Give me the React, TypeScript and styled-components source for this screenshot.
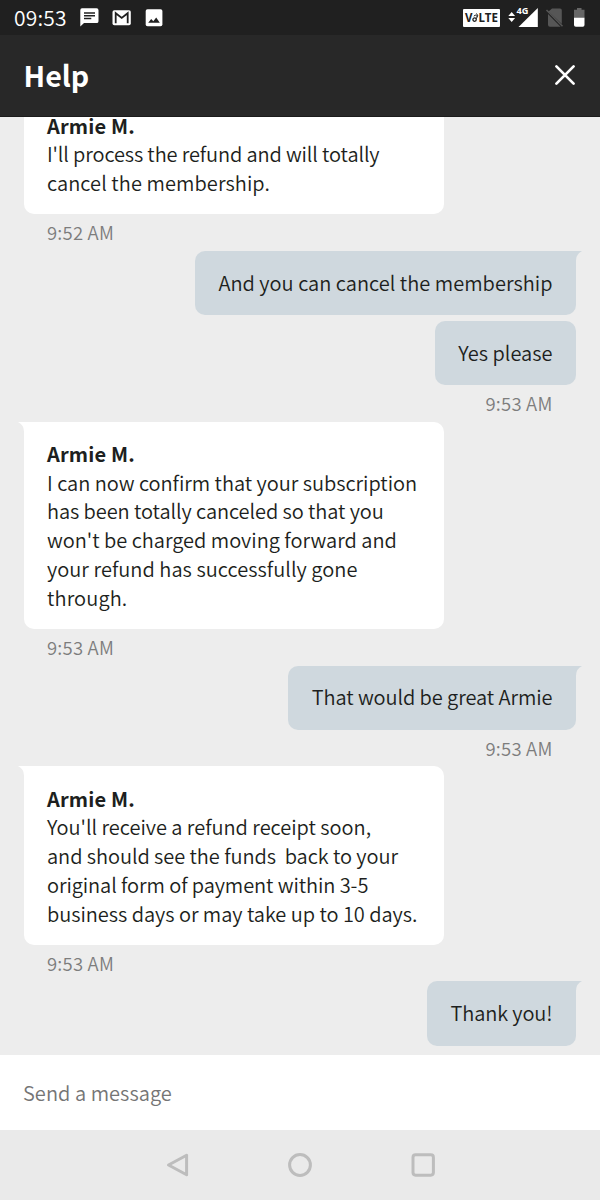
import React from 'react';
import styled, { createGlobalStyle } from 'styled-components';

const Global = createGlobalStyle`
  * { box-sizing: border-box; }
  body { margin: 0; background: #ededed; }
`;

const Screen = styled.div`
  width: 600px;
  height: 1200px;
  display: flex;
  flex-direction: column;
  overflow: hidden;
  background: #ededed;
  color: #1d1f20;
  font-family: 'Noto Sans CJK JP', 'Noto Sans', sans-serif;
  font-weight: 350;
  font-size: 20px;
`;

const StatusBar = styled.div`
  flex: none;
  height: 35px;
  padding: 0 15px 0 14px;
  display: flex;
  align-items: center;
  justify-content: space-between;
  background: #202020;
  color: #fff;
`;

const Clock = styled.span`
  width: 65px;
  font-size: 21px;
  letter-spacing: 0.2px;
  line-height: 35px;
`;

const StatusGroup = styled.div`
  display: flex;
  align-items: center;
  svg { display: block; }
`;

const VolteBadge = styled.span`
  width: 37px;
  height: 18px;
  margin-right: 7px;
  display: flex;
  align-items: center;
  justify-content: center;
  border-radius: 1px;
  background: #fff;
  color: #202020;
  font: 700 11.5px/18px 'Noto Sans', sans-serif;
  svg { margin: 0 0 1px -1px; }
`;

const Header = styled.header`
  flex: none;
  height: 82px;
  padding: 0 24.5px 2px 23.5px;
  display: flex;
  align-items: center;
  justify-content: space-between;
  background: #282828;
  border-bottom: 1px solid #1b1b1b;
  color: #fff;
`;

const Title = styled.h1`
  margin: 0;
  font-size: 28.6px;
  font-weight: 700;
  line-height: 40px;
`;

const CloseButton = styled.button`
  padding: 0;
  border: 0;
  background: none;
  svg { display: block; }
`;

const Chat = styled.main`
  flex: 1;
  min-height: 0;
  padding: 0 24px 9.4px;
  display: flex;
  flex-direction: column;
  justify-content: flex-end;
  overflow: hidden;
`;

const Bubble = styled.div<{ $mine?: boolean; $tail?: boolean }>`
  flex: none;
  position: relative;
  align-self: ${p => (p.$mine ? 'flex-end' : 'flex-start')};
  width: ${p => (p.$mine ? 'auto' : '420px')};
  padding: ${p => (p.$mine ? '17.7px 23.5px' : '18.5px 23px 16.7px')};
  border-radius: 10px;
  border-top-left-radius: ${p => (p.$tail && !p.$mine ? 0 : 10)}px;
  border-top-right-radius: ${p => (p.$tail && p.$mine ? 0 : 10)}px;
  background: ${p => (p.$mine ? '#cfd8de' : '#fff')};
  & + & { margin-top: 6.2px; }
`;

const TailShape = styled.svg<{ $mine?: boolean }>`
  position: absolute;
  top: 0;
  ${p => (p.$mine ? 'right: -6px;' : 'left: -6px; transform: scaleX(-1);')}
  fill: ${p => (p.$mine ? '#cfd8de' : '#fff')};
`;

const Sender = styled.div`
  font-weight: 700;
  letter-spacing: 0.15px;
  line-height: 28.4px;
`;

const Line = styled.div<{ $track: number }>`
  line-height: 28.8px;
  white-space: pre;
  letter-spacing: ${p => p.$track}px;
`;

const Time = styled.time<{ $mine?: boolean }>`
  flex: none;
  height: 36.4px;
  padding: 0 23.5px 0 23px;
  align-self: ${p => (p.$mine ? 'flex-end' : 'flex-start')};
  color: #7d7d7d;
  font-size: 18.5px;
  letter-spacing: 0.2px;
  line-height: 36.4px;
`;

const Composer = styled.div`
  flex: none;
  height: 75px;
  padding: 0 23px;
  background: #fff;
  color: #757575;
  letter-spacing: 0.05px;
  line-height: 75px;
`;

const NavBar = styled.nav`
  flex: none;
  height: 70px;
  display: flex;
  align-items: center;
  justify-content: center;
  gap: 99px;
  background: #eaeaea;
  svg { display: block; fill: none; stroke: #bdbdbd; stroke-width: 3; stroke-linejoin: round; }
`;

type TextLine = [text: string, track: number];
type Item =
  | { kind: 'bubble'; mine?: boolean; tail?: boolean; lines: TextLine[] }
  | { kind: 'time'; mine?: boolean; text: string };

const items: Item[] = [
  { kind: 'bubble', tail: true, lines: [
    ["I'll process the refund and will totally", -0.13],
    ['cancel the membership.', 0.07],
  ] },
  { kind: 'time', text: '9:52 AM' },
  { kind: 'bubble', mine: true, tail: true, lines: [['And you can cancel the membership', 0.02]] },
  { kind: 'bubble', mine: true, lines: [['Yes please', 0]] },
  { kind: 'time', mine: true, text: '9:53 AM' },
  { kind: 'bubble', tail: true, lines: [
    ['I can now confirm that your subscription', -0.03],
    ['has been totally canceled so that you', -0.08],
    ["won't be charged moving forward and", -0.02],
    ['your refund has successfully gone', 0.04],
    ['through.', 0.1],
  ] },
  { kind: 'time', text: '9:53 AM' },
  { kind: 'bubble', mine: true, tail: true, lines: [['That would be great Armie', -0.08]] },
  { kind: 'time', mine: true, text: '9:53 AM' },
  { kind: 'bubble', tail: true, lines: [
    ["You'll receive a refund receipt soon,", -0.02],
    ['and should see the funds  back to your', -0.06],
    ['original form of payment within 3-5', -0.09],
    ['business days or may take up to 10 days.', -0.04],
  ] },
  { kind: 'time', text: '9:53 AM' },
  { kind: 'bubble', mine: true, tail: true, lines: [['Thank you!', -0.1]] },
];

const NotificationIcons = () => (
  <svg width="84" height="35" viewBox="79 0 84 35" fill="#fff">
    <path d="M82 8.3h14.6q1.9 0 1.9 1.9v11q0 1.9-1.9 1.9H84l-3.7 3.4V10.2q0-1.9 1.7-1.9zM84 12.3v1.5h11v-1.5zM84 15v1.5h11V15zM84 17.8v1.5h7.3v-1.5z" fillRule="evenodd" />
    <rect x="112.5" y="10.3" width="18.3" height="14.9" rx="1.8" />
    <path d="M115.7 23.3V13.2l6 4.7 6-4.7v10.1" fill="none" stroke="#202020" strokeWidth="1.8" />
    <rect x="145.7" y="9.3" width="16.7" height="17" rx="1.8" />
    <path d="M148.2 22.8l3-3.8 2.1 2.3 2.9-3.7 3.6 5.2z" fill="#202020" />
  </svg>
);

const VolteWave = () => (
  <svg width="7" height="11" viewBox="0 0 7 11" fill="none" stroke="#202020" strokeWidth="1.3">
    <circle cx="2.6" cy="7.6" r="1.7" />
    <path d="M1.8 4.2q1.6-2 2.6-.4t1.6 0M4 1.6q2.2.4 1.2 3.2l-1 2" strokeWidth="1" />
  </svg>
);

const FourG = styled.span`
  position: absolute;
  left: 9.5px;
  top: 6px;
  font: 700 9.2px/10px 'Noto Sans', sans-serif;
`;

const Signal = styled.div`
  position: relative;
`;

const SignalIcons = () => (
  <Signal>
    <svg width="78" height="35" viewBox="507 0 78 35" fill="#fff">
      <path d="M508.3 16l3.4-3.9 3.4 3.9zM508.3 18l3.4 3.9 3.4-3.9z" />
      <path d="M518.5 27L537.8 8v19z" />
      <path d="M552 8.5h8q1.8 0 1.8 1.8V24L548.5 11.5zM548 14l12.6 12.8H550q-2 0-2-2z" fill="#565656" />
      <path d="M546.5 10l16 16.3" stroke="#565656" strokeWidth="1.5" />
      <path d="M577 8h4.5v1.7h3V18H574V9.7h3z" fill="#666" />
      <path d="M574 17.7h10.5V25q0 1.7-1.7 1.7h-7q-1.8 0-1.8-1.7z" />
    </svg>
    <FourG>4G</FourG>
  </Signal>
);

const Tail = ({ mine }: { mine?: boolean }) => (
  <TailShape $mine={mine} width="7" height="10" viewBox="-1 0 7 10">
    <path d="M-1 0H6Q0 3 0 9.5H-1z" />
  </TailShape>
);

export default function App() {
  return (
    <Screen>
      <Global />
      <StatusBar>
        <StatusGroup>
          <Clock>09:53</Clock>
          <NotificationIcons />
        </StatusGroup>
        <StatusGroup>
          <VolteBadge>V<VolteWave />LTE</VolteBadge>
          <SignalIcons />
        </StatusGroup>
      </StatusBar>
      <Header>
        <Title>Help</Title>
        <CloseButton aria-label="Close">
          <svg width="22" height="22" viewBox="0 0 22 22" stroke="#fff" strokeWidth="2.7" strokeLinecap="round">
            <path d="M2.4 2.4l17.2 17.2M19.6 2.4L2.4 19.6" />
          </svg>
        </CloseButton>
      </Header>
      <Chat>
        {items.map((item, i) =>
          item.kind === 'time' ? (
            <Time key={i} $mine={item.mine}>{item.text}</Time>
          ) : (
            <Bubble key={i} $mine={item.mine} $tail={item.tail}>
              {item.tail && <Tail mine={item.mine} />}
              {!item.mine && <Sender>Armie M.</Sender>}
              {item.lines.map(([text, track]) => (
                <Line key={text} $track={track}>{text}</Line>
              ))}
            </Bubble>
          ),
        )}
      </Chat>
      <Composer>Send a message</Composer>
      <NavBar>
        <svg width="24" height="26" viewBox="0 0 24 26"><path d="M3.5 13L21.6 3.2v19.6z" /></svg>
        <svg width="24" height="24" viewBox="0 0 24 24"><circle cx="12" cy="12" r="10.4" /></svg>
        <svg width="24" height="24" viewBox="0 0 24 24"><rect x="2" y="1.8" width="20.4" height="20.4" rx="2.6" /></svg>
      </NavBar>
    </Screen>
  );
}
